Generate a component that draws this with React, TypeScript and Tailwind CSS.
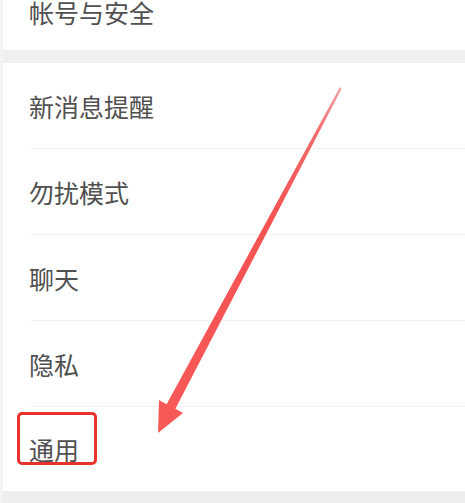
import React from "react";

const font = { fontFamily: '"Noto Sans CJK SC", "Noto Sans", sans-serif' };

function Row({ label, divider = true, h = "h-[86px]" }: { label: string; divider?: boolean; h?: string }) {
  return (
    <div className={`relative flex ${h} items-center pl-[29px]`}>
      <span className="text-[25px] leading-[30px] text-[#505050]">{label}</span>
      {divider && <div className="absolute bottom-0 left-[31px] right-0 h-px bg-[#f1f1f1]" />}
    </div>
  );
}

export default function App() {
  return (
    <div className="relative h-[503px] w-[465px] overflow-hidden bg-white" style={font}>
      <div className="absolute left-0 top-0 bottom-0 w-[3px] bg-[#f3f3f3]" />
      <div className="flex h-[50px] items-center pb-[26px] pl-[29px]">
        <span className="text-[25px] leading-[30px] text-[#505050]">帐号与安全</span>
      </div>
      <div className="h-[13px] bg-[#efefef]" />
      <Row label="新消息提醒" />
      <Row label="勿扰模式" />
      <Row label="聊天" />
      <Row label="隐私" />
      <Row label="通用" divider={false} h="h-[84px]" />
      <div className="h-[12px] bg-[#eeeeee]" />

      <div className="absolute left-[17px] top-[412px] h-[53px] w-[80px] rounded-[5px] border-[3px] border-[#e8322d]" />

      <svg className="absolute left-0 top-0" width="465" height="503" viewBox="0 0 465 503">
        <defs>
          <linearGradient id="g" x1="340" y1="88" x2="170" y2="410" gradientUnits="userSpaceOnUse">
            <stop offset="0" stopColor="#f4a0a0" />
            <stop offset="0.15" stopColor="#f26a6a" />
            <stop offset="0.4" stopColor="#f65252" />
            <stop offset="1" stopColor="#f75858" />
          </linearGradient>
        </defs>
        <polygon
          points="340,87 341.5,89 175.4,408.8 183,413 158,433 159,400 166.6,404.2"
          fill="url(#g)"
        />
      </svg>
    </div>
  );
}
